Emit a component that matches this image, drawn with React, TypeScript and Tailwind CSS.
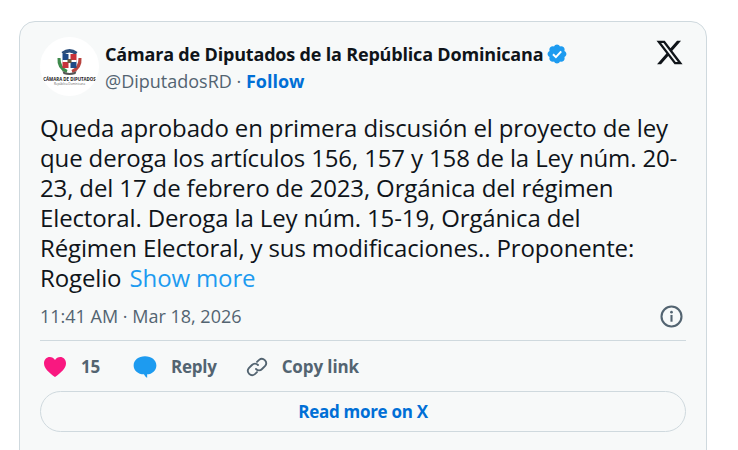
import React from 'react';

const BODY = [
  'Queda aprobado en primera discusión el proyecto de ley',
  'que deroga los artículos 156, 157 y 158 de la Ley núm. 20-',
  '23, del 17 de febrero de 2023, Orgánica del régimen',
  'Electoral. Deroga la Ley núm. 15-19, Orgánica del',
  'Régimen Electoral, y sus modificaciones.. Proponente:',
];

function CoatOfArms() {
  return (
    <svg viewBox="0 0 30 28" className="w-[31px] h-[28px]">
      <path d="M7 5 Q15 -1 23 5 L21 8 Q15 3 9 8 Z" fill="#2c4f7c" />
      <path d="M3 11 Q2 22 12 26 L13 23 Q6 20 6 11 Z" fill="#3f8a4c" />
      <path d="M27 11 Q28 22 18 26 L17 23 Q24 20 24 11 Z" fill="#b8433f" />
      <rect x="8" y="7" width="7" height="7" fill="#1f4a86" />
      <rect x="15" y="7" width="7" height="7" fill="#c8323a" />
      <rect x="8" y="14" width="7" height="7" fill="#c8323a" />
      <rect x="15" y="14" width="7" height="7" fill="#1f4a86" />
      <rect x="14" y="7" width="2" height="14" fill="#fff" />
      <rect x="8" y="13" width="14" height="2" fill="#fff" />
      <rect x="13" y="12" width="4" height="4" fill="#6b5a3c" />
      <path d="M8 24 Q15 28 22 24 L21 27 Q15 29 9 27 Z" fill="#555" />
    </svg>
  );
}

function Avatar() {
  return (
    <div className="w-[59px] h-[59px] rounded-full bg-white flex flex-col items-center justify-center shrink-0 overflow-hidden">
      <CoatOfArms />
      <div className="text-[4.4px] leading-[5px] font-bold text-[#222] whitespace-nowrap mt-[2px]">CÁMARA DE DIPUTADOS</div>
      <div className="text-[3px] leading-[4px] text-[#666] whitespace-nowrap">República Dominicana</div>
    </div>
  );
}

export default function App() {
  return (
    <div className="h-[450px] w-[738px] overflow-hidden bg-white pt-[21px] pl-[19px] font-['Open_Sans','Noto_Sans',sans-serif]">
      <div className="w-[688px] h-[460px] rounded-[16px] border border-[#cfd9de] bg-[#f7f9f9] px-5 pt-[15px]">
        <div className="flex items-start">
          <Avatar />
          <div className="ml-[6px] mt-[4px] flex-1">
            <div className="flex items-center h-[26px]">
              <span className="text-[18px] font-bold text-[#0f1419] tracking-[-0.18px]">Cámara de Diputados de la República Dominicana</span>
              <svg viewBox="0 0 22 22" className="w-[22px] h-[22px] ml-[3px]">
                <path fill="#1d9bf0" d="M20.4 11c0-1.3-.8-2.5-2-3 .5-1.300.2-2.700-.7-3.700-1-.9-2.400-1.200-3.700-.7-.5-1.200-1.700-2-3-2s-2.500.8-3 2c-1.300-.5-2.700-.2-3.700.7-.9 1-1.200 2.400-.7 3.700-1.200.5-2 1.700-2 3s.8 2.500 2 3c-.5 1.300-.2 2.700.7 3.700 1 .9 2.400 1.200 3.700.7.5 1.200 1.700 2 3 2s2.500-.8 3-2c1.300.5 2.700.2 3.700-.7.900-1 1.200-2.400.7-3.700 1.200-.5 2-1.700 2-3z" />
                <path fill="none" stroke="#fff" strokeWidth="2" d="M7 11.200l2.900 2.900 5.300-5.800" />
              </svg>
              <div className="flex-1" />
              <svg viewBox="0 0 24 24" className="w-[29px] h-[29px] -mt-[3px] mr-[2px]">
                <path fill="#0f1419" d="M18.244 2.250h3.308l-7.227 8.260 8.502 11.240H16.170l-5.214-6.817L4.990 21.750H1.680l7.730-8.835L1.254 2.250H8.080l4.713 6.231zm-1.161 17.520h1.833L7.084 4.126H5.117z" />
              </svg>
            </div>
            <div className="text-[18px] leading-[24px] mt-[2px]">
              <span className="text-[#536471]">@DiputadosRD · </span>
              <span className="font-bold text-[#006fd6]">Follow</span>
            </div>
          </div>
        </div>

        <div className="mt-[17px] text-[24px] leading-[30px] text-[#0f1419] tracking-[-0.13px] whitespace-nowrap">
          {BODY.map((line) => (
            <div key={line}>{line}</div>
          ))}
          <div>
            Rogelio <span className="ml-[2px] text-[#1d9bf0]">Show more</span>
          </div>
        </div>

        <div className="mt-[8px] flex items-center justify-between h-[30px]">
          <span className="text-[18px] text-[#536471]">11:41 AM · Mar 18, 2026</span>
          <svg viewBox="0 0 24 24" className="w-[25px] h-[25px] mr-[2px]">
            <circle cx="12" cy="12" r="9.600" fill="none" stroke="#536471" strokeWidth="2" />
            <circle cx="12" cy="7.800" r="1.300" fill="#536471" />
            <rect x="11" y="10.500" width="2" height="6.500" fill="#536471" />
          </svg>
        </div>

        <div className="mt-[9px] border-t border-[#cfd9de]" />

        <div className="mt-[11px] flex items-center h-[30px] text-[17px] font-bold text-[#536471] tracking-[-0.25px]">
          <svg viewBox="0 0 22 20" className="w-[22px] h-[20px] ml-[4px]">
            <path fill="#f91880" d="M11 20C5 15.500 0 11.500 0 6.200 0 2.700 2.600 0 5.800 0 7.900 0 9.900 1 11 2.900 12.100 1 14.100 0 16.200 0 19.400 0 22 2.700 22 6.200 22 11.500 17 15.500 11 20z" />
          </svg>
          <span className="ml-[15px] w-[34px]">15</span>
          <svg viewBox="0 0 24 24" className="w-[26px] h-[26px] ml-[17px]">
            <path fill="#1d9bf0" d="M1.500 10.500C1.500 5.500 6 2 12 2s10.500 3.500 10.500 8.500c0 4.600-4 8-8.500 8.300V22c-.6 0-1.500-.8-3-3.200C5.500 18.500 1.500 15 1.500 10.500z" />
          </svg>
          <span className="ml-[13px]">Reply</span>
          <svg viewBox="0 0 24 24" className="w-[22px] h-[22px] ml-[29px]" fill="none" stroke="#536471" strokeWidth="2" strokeLinecap="round">
            <path d="M12 6.500l2.300-2.300a4.700 4.700 0 0 1 6.600 6.600l-3.400 3.400a4.700 4.700 0 0 1-6.600 0" />
            <path d="M12 17.500l-2.300 2.300a4.700 4.700 0 0 1-6.600-6.600l3.400-3.400a4.700 4.700 0 0 1 6.600 0" />
          </svg>
          <span className="ml-[14px] tracking-[-0.1px]">Copy link</span>
        </div>

        <div className="mt-[9px] h-[41px] rounded-full border border-[#cfd9de] flex items-center justify-center text-[17px] font-bold text-[#006fd6] tracking-[-0.3px]">
          Read more on X
        </div>
      </div>
    </div>
  );
}
